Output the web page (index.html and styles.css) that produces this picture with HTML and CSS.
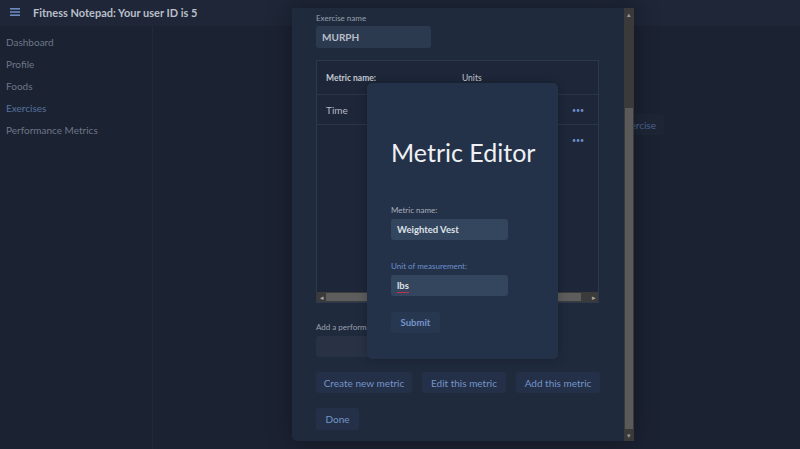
FILE: index.html
```html
<!DOCTYPE html>
<html lang="en">
<head>
<meta charset="utf-8">
<title>Fitness Notepad</title>
<link rel="stylesheet" href="styles.css">
</head>
<body>
<header class="topbar">
  <svg class="menu-icon" width="10" height="8" viewBox="0 0 10 8"><rect x="0" y="0" width="10" height="1.6" fill="#6d8bc0"/><rect x="0" y="3.2" width="10" height="1.6" fill="#6d8bc0"/><rect x="0" y="6.4" width="10" height="1.6" fill="#6d8bc0"/></svg>
  <span class="app-title">Fitness Notepad: Your user ID is 5</span>
</header>
<div class="layout">
  <nav class="sidebar">
    <a class="nav-item">Dashboard</a>
    <a class="nav-item">Profile</a>
    <a class="nav-item">Foods</a>
    <a class="nav-item active">Exercises</a>
    <a class="nav-item">Performance Metrics</a>
  </nav>
  <main class="content">
    <div class="content-toolbar"><button class="bg-btn">Add exercise</button></div>
  </main>
</div>

<div class="dialog">
  <div class="dialog-body">
    <label class="field-label">Exercise name</label>
    <div class="input name-input">MURPH</div>
    <div class="metric-table">
      <div class="trow thead">
        <span class="c-name">Metric name:</span>
        <span class="c-units">Units</span>
      </div>
      <div class="trow tr-time">
        <span class="c-name">Time</span>
        <span class="c-units"></span>
        <span class="c-more">•••</span>
      </div>
      <div class="trow tr-empty">
        <span class="c-name"></span>
        <span class="c-units"></span>
        <span class="c-more">•••</span>
      </div>
      <div class="table-fill"></div>
      <div class="hscroll">
        <span class="hs-arrow">◂</span>
        <span class="hs-thumb"></span>
        <span class="hs-arrow">▸</span>
      </div>
    </div>
    <label class="field-label perf-label">Add a performance metric</label>
    <div class="input perf-select"></div>
    <div class="btn-row">
      <button class="btn">Create new metric</button>
      <button class="btn">Edit this metric</button>
      <button class="btn">Add this metric</button>
    </div>
    <button class="btn done-btn">Done</button>
  </div>
  <div class="vscroll">
    <span class="vs-arrow">▴</span>
    <span class="vs-track"><span class="vs-thumb"></span></span>
    <span class="vs-arrow">▾</span>
  </div>
</div>

<div class="metric-editor">
  <h1 class="me-title">Metric Editor</h1>
  <label class="me-label">Metric name:</label>
  <div class="me-input">Weighted Vest</div>
  <label class="me-label focus">Unit of measurement:</label>
  <div class="me-input"><span class="spell">lbs</span></div>
  <button class="me-submit">Submit</button>
</div>
</body>
</html>
```

FILE: styles.css
```css
* { box-sizing: border-box; }
html, body { margin: 0; padding: 0; }
body {
  width: 800px;
  height: 449px;
  overflow: hidden;
  background: #1b2232;
  font-family: "Lato", "Open Sans", sans-serif;
  color: #c5cad3;
  position: relative;
  display: flex;
  flex-direction: column;
}
.topbar {
  height: 26px;
  background: #1e2637;
  display: flex;
  align-items: center;
  padding-left: 10px;
  gap: 13px;
  flex-shrink: 0;
}
.menu-icon { display: block; margin-top: -2px; }
.app-title {
  font-size: 11px;
  font-weight: 700;
  color: #b9bfc9;
  margin-top: -1px;
}
.layout { flex: 1; display: flex; }
.sidebar {
  width: 153px;
  border-right: 1px solid #222a3a;
  display: flex;
  flex-direction: column;
  padding-top: 5px;
  padding-left: 6px;
}
.nav-item {
  font-size: 10px;
  line-height: 22px;
  color: #6e7686;
}
.nav-item.active { color: #56729f; }
.content { flex: 1; }
.content-toolbar { display: flex; justify-content: flex-end; padding: 88px 136px 0 0; }
.bg-btn {
  font-family: inherit;
  font-size: 10px;
  color: #4c6591;
  background: #1e2636;
  border: none;
  border-radius: 3px;
  height: 21px;
  padding: 0 8px;
}

/* main dialog */
.dialog {
  position: absolute;
  left: 292px;
  top: 8px;
  width: 342px;
  height: 433px;
  background: #1f2a3d;
  border-radius: 0 0 0 5px;
  display: flex;
  box-shadow: 0 0 24px rgba(0,0,0,0.35);
}
.dialog-body {
  flex: 1;
  padding: 5px 24px 0 24px;
  display: flex;
  flex-direction: column;
  align-items: flex-start;
}
.field-label {
  font-size: 8px;
  line-height: 10px;
  color: #9aa1ad;
}
.input {
  margin-top: 3px;
  height: 22px;
  background: #2c3a50;
  border-radius: 3px;
  font-size: 10px;
  font-weight: 700;
  line-height: 22px;
  padding-left: 6px;
  color: #b8bfca;
}
.name-input { width: 115px; }
.metric-table {
  margin-top: 12px;
  width: 283px;
  height: 243px;
  border: 1px solid #2d384c;
  display: flex;
  flex-direction: column;
  background: #1d2739;
}
.trow {
  display: flex;
  align-items: center;
  border-bottom: 1px solid #2a3548;
}
.thead { height: 34px; }
.tr-time { height: 30px; }
.tr-empty { height: 30px; border-bottom: none; }
.c-name { width: 145px; padding-left: 9px; font-size: 10px; color: #b3b9c4; }
.thead .c-name, .thead .c-units { font-size: 8.5px; font-weight: 700; color: #c2c7d0; }
.thead .c-units { font-weight: 400; }
.c-units { width: 110px; }
.c-more { font-size: 7px; color: #6e8fc8; }
.table-fill { flex: 1; }
.hscroll {
  height: 10px;
  display: flex;
  align-items: center;
  background: #3b3b3b;
}
.hs-arrow { width: 9px; font-size: 7px; line-height: 10px; text-align: center; color: #aaa; }
.hs-thumb { flex: 1; height: 8px; background: #5d5d5d; margin-right: 8px; }
.perf-label { margin-top: 19px; white-space: nowrap; }
.perf-select {
  margin-top: 4px;
  width: 220px;
  height: 21px;
  background: #283244;
}
.btn-row { display: flex; gap: 10px; margin-top: 15px; }
.btn {
  font-family: inherit;
  font-size: 10px;
  color: #7494ca;
  background: #243047;
  border: none;
  border-radius: 3px;
  height: 21px;
  padding: 0 4px;
  white-space: nowrap;
}
.btn-row .btn:nth-child(1) { width: 96px; }
.btn-row .btn:nth-child(2) { width: 84px; }
.btn-row .btn:nth-child(3) { width: 84px; }
.done-btn { margin-top: 15px; width: 43px; height: 22px; }

.vscroll {
  width: 11px;
  background: #3a3a3a;
  display: flex;
  flex-direction: column;
}
.vs-arrow { height: 12px; font-size: 7px; line-height: 12px; text-align: center; color: #999; }
.vs-track { flex: 1; display: flex; flex-direction: column; justify-content: flex-end; }
.vs-thumb { height: 321px; background: #5a5a5a; margin: 0 1px; }

/* metric editor */
.metric-editor {
  position: absolute;
  left: 367px;
  top: 83px;
  width: 191px;
  height: 276px;
  background: #243249;
  border-radius: 5px;
  padding: 0 24px;
  display: flex;
  flex-direction: column;
  align-items: flex-start;
  box-shadow: 0 0 10px rgba(0,0,0,0.25);
}
.me-title {
  margin: 54px 0 0 0;
  font-size: 25px;
  line-height: 30px;
  font-weight: 400;
  color: #eef0f3;
  white-space: nowrap;
}
.me-label {
  font-size: 8px;
  line-height: 10px;
  color: #a7aeba;
}
.me-title + .me-label { margin-top: 38px; }
.me-label.focus { color: #6d90cc; margin-top: 21px; }
.me-input {
  margin-top: 4px;
  width: 117px;
  height: 21px;
  background: #34455e;
  border-radius: 3px;
  padding-left: 6px;
  font-size: 9.5px;
  font-weight: 700;
  line-height: 21px;
  color: #dde1e7;
}
.spell {
  display: inline-block;
  line-height: 10px;
  padding-bottom: 1px;
  border-bottom: 1px solid #c0304a;
}
.me-submit {
  margin-top: 16px;
  font-family: inherit;
  font-size: 9.5px;
  font-weight: 700;
  color: #7394cc;
  background: #283750;
  border: none;
  border-radius: 3px;
  width: 49px;
  height: 21px;
}
```
